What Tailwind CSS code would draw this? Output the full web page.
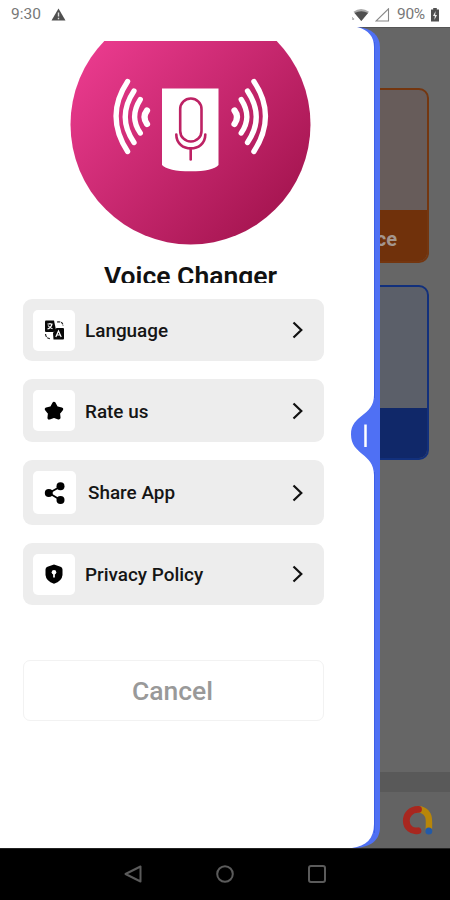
<!DOCTYPE html>
<html lang="en">
<head>
<meta charset="utf-8">
<title>Voice Changer</title>
<script src="https://cdn.jsdelivr.net/npm/@tailwindcss/browser@4"></script>
</head>
<body class="w-[450px] h-[900px] overflow-hidden flex flex-col bg-white font-[Roboto,sans-serif]">
<header class="h-[27px] shrink-0 flex items-center justify-between pl-[11px] pr-[10px] pt-[2px] text-[#777] text-[15.5px]">
  <div class="flex items-center gap-[9px]">
    <span class="w-[31px]">9:30</span>
    <svg class="-mt-px" width="15" height="13" viewBox="0 0 15 13"><path d="M7.5 .5L14.5 12.5H.5Z" fill="#505050"/><path d="M7.5 4.5V8.5M7.5 9.8V11.2" stroke="#ddd" stroke-width="1.4"/></svg>
  </div>
  <div class="flex items-center">
    <svg width="18" height="14" viewBox="0 0 18 14"><path d="M1.5 3.8Q9-2 17 3.8L9.3 13Z" fill="#aaa"/><path d="M2.500 5Q9.3 1.500 16 5L9.3 13Z" fill="#505050"/><path d="M.3 9V12M1.6 10V12" stroke="#999" stroke-width=".8"/></svg>
    <svg class="ml-[5px]" width="15" height="14" viewBox="0 0 15 14"><path d="M1 13H13.5V.8Z" fill="none" stroke="#888" stroke-width="1.1"/></svg>
    <span class="ml-[7px] w-[29px] tracking-[-0.3px]">90%</span>
    <svg class="ml-[4px]" width="10" height="14" viewBox="0 0 10 14"><path d="M3.2 0H6.8V1.5H9V13.5H1V1.5H3.2Z" fill="#505050"/><path d="M5.6 3L3 8H4.8L4.4 12L7 7H5.2Z" fill="#eee"/></svg>
  </div>
</header>

<main class="relative h-[821px] shrink-0 bg-[#666] overflow-hidden">
  <!-- dimmed page under the drawer -->
  <div class="h-full flex flex-col border-t border-[#555]">
    <div class="w-[429px] pt-[60px] flex flex-col gap-[22px]">
      <section class="h-[175px] rounded-[10px] border-2 border-[#74360f] bg-[#675c5a] overflow-hidden flex flex-col justify-end">
        <div class="h-[51px] bg-[#70310b] flex items-center justify-end pr-[30px] pt-[7px] text-[20px] font-bold text-[#a4968e]">Change Voice</div>
      </section>
      <section class="h-[175px] rounded-[10px] border-2 border-[#12307c] bg-[#5b5f69] overflow-hidden flex flex-col justify-end">
        <div class="h-[50px] bg-[#102869]"></div>
      </section>
    </div>
    <div class="mt-auto h-[20px] bg-[#595959]"></div>
    <div class="h-[56px] bg-[#636363] flex justify-end pr-[15px] pt-[11px]">
      <svg width="34" height="34" viewBox="0 0 34 34" fill="none" stroke-linecap="round"><path d="M17 6.4C18.5 5.9 24.5 7.2 27 12.5C28.5 15.5 28 22 27.8 27" stroke="#b88609" stroke-width="6.500"/><path d="M17.500 6.4C9.500 6.2 5.3 12 5.3 17.8C5.3 24.5 11 29 17 27.700" stroke="#a8271f" stroke-width="6.800"/><circle cx="27.8" cy="28" r="3.5" fill="#235aa8"/></svg>
    </div>
  </div>

  <!-- drawer surface and its pull handle -->
  <svg class="absolute left-0 top-0" width="380" height="821" viewBox="0 0 380 821">
    <path d="M0 0H357C372 1 380 9 380 20V800C380 813 371 821 352 821H0Z" fill="#4f70f4"/>
    <path d="M0 0H357C369 3 374 10 374 20V368C374 390 351 387 351 407.500C351 428 374 426 374 448V797C374 812 366 819 352 821H0Z" fill="#fff"/>
    <path d="M374.500 15V371M374.500 445V806" stroke="#3c5fe8" stroke-width="1"/>
    <path d="M365.500 397.500V420" stroke="#fff" stroke-width="2.500"/>
  </svg>

  <aside class="absolute left-0 top-0 w-[347px] h-full pl-[23px] pr-[23px] pt-[14px] flex flex-col">
    <svg class="ml-[47px] shrink-0" width="241" height="205" viewBox="70 41 241 205">
      <defs><linearGradient id="pink" x1="95" y1="45" x2="280" y2="220" gradientUnits="userSpaceOnUse"><stop stop-color="#e93a8d"/><stop offset="1" stop-color="#a51550"/></linearGradient></defs>
      <circle cx="190.500" cy="124.500" r="120" fill="url(#pink)"/>
      <path d="M162 88.500H218.500V165Q213 171.300 190.500 171.300T162 165Z" fill="#fff"/>
      <g fill="none" stroke="#bd2264" stroke-width="2.600" stroke-linecap="round"><rect x="180.200" y="98.500" width="21.300" height="43" rx="10.600"/><path d="M176.300 134.500C176.300 153 205.300 153 205.300 134.500"/><path d="M190.700 149.500V159.500"/></g>
      <g id="waves" fill="none" stroke="#fff" stroke-width="5.300" stroke-linecap="round"><path d="M127.600 81.500Q104.500 116 127.600 151.500"/><path d="M134 91Q116.500 117 134 142.500"/><path d="M140.300 99.500Q129 117 140.300 133"/><path stroke-width="6.200" d="M147 110.500Q142 117 147 124"/></g>
      <use href="#waves" transform="translate(381.500 0) scale(-1 1)"/>
    </svg>
    <h1 class="h-[37px] -ml-[23px] w-[381px] shrink-0 overflow-hidden pt-[14px] text-center text-[26.500px] leading-[31px] font-semibold text-[#111] text-nowrap">Voice Changer</h1>
    <nav class="mt-[16px] flex flex-col gap-[18px] text-[18.9px] font-medium text-[#151515]">
      <div class="h-[62px] rounded-[9px] bg-[#ededed] flex items-center pl-[10px] pr-[21px]">
        <span class="w-[42px] h-[41px] rounded-[5px] bg-white flex items-center justify-center">
          <svg width="22" height="21" viewBox="0 0 22 21"><path d="M2 1.500Q2 .5 3 .5H11L13 10L10.500 12H3Q2 12 2 11Z" fill="#080808"/><path d="M4.500 4H9.500M7 3V4.500M9 4Q8 8 4.500 9M5 5.500Q7 8 9.500 8.800" fill="none" stroke="#fff" stroke-width="1.200"/><path d="M13.500 8H20Q21 8 21 9V18.500Q21 19.500 20 19.500H10.500L10 13Z" fill="#080808"/><path d="M12.800 17L15.500 11L18.200 17M14 15H17.300" fill="none" stroke="#fff" stroke-width="1.200"/><path d="M14 2Q20 1 20 6M2.500 14Q3 19 8 18.500" fill="none" stroke="#222" stroke-width="1.200" stroke-dasharray="3 1"/></svg>
        </span>
        <span class="ml-[10px] flex-1 pt-[3px]">Language</span>
        <svg width="11" height="18" viewBox="0 0 11 18" fill="none" stroke="#111" stroke-width="2.200"><path d="M1.500 1.500L9.300 9L1.500 16.500"/></svg>
      </div>
      <div class="h-[63px] rounded-[9px] bg-[#ededed] flex items-center pl-[10px] pr-[21px]">
        <span class="w-[42px] h-[41px] rounded-[5px] bg-white flex items-center justify-center">
          <svg width="20" height="20" viewBox="0 0 20 20"><path d="M10 2.500L12.300 6.900L17.500 8.200L14.300 12.100L14.800 16.800L10 15L5.200 16.800L5.700 12.100L2.500 8.200L7.700 6.900Z" fill="#000" stroke="#000" stroke-width="3.500" stroke-linejoin="round"/></svg>
        </span>
        <span class="ml-[10px] flex-1 pt-[3px]">Rate us</span>
        <svg width="11" height="18" viewBox="0 0 11 18" fill="none" stroke="#111" stroke-width="2.200"><path d="M1.500 1.500L9.300 9L1.500 16.500"/></svg>
      </div>
      <div class="h-[65px] rounded-[9px] bg-[#ededed] flex items-center pl-[10px] pr-[21px]">
        <span class="w-[43px] h-[43px] rounded-[5px] bg-white flex items-center justify-center">
          <svg width="22" height="22" viewBox="0 0 22 22"><path d="M16.500 4.500L5 11L16.500 18" fill="none" stroke="#000" stroke-width="1.800"/><circle cx="16.500" cy="4.200" r="4" /><circle cx="4.800" cy="11" r="4"/><circle cx="16.500" cy="18" r="4"/></svg>
        </span>
        <span class="ml-[12px] flex-1 pt-[2px]">Share App</span>
        <svg width="11" height="18" viewBox="0 0 11 18" fill="none" stroke="#111" stroke-width="2.200"><path d="M1.500 1.500L9.300 9L1.500 16.500"/></svg>
      </div>
      <div class="h-[62px] rounded-[9px] bg-[#ededed] flex items-center pl-[10px] pr-[21px]">
        <span class="w-[42px] h-[41px] rounded-[5px] bg-white flex items-center justify-center">
          <svg width="18" height="20" viewBox="0 0 18 20"><path d="M9 .5L15.500 2.800Q17.500 3.500 17.500 5.500V11Q17 17 9 19.800Q1 17 .5 11V5.500Q.5 3.500 2.500 2.800Z"/><circle cx="9" cy="8.200" r="2.300" fill="#fff"/><path d="M9 9V13.500" stroke="#fff" stroke-width="1.700"/></svg>
        </span>
        <span class="ml-[10px] flex-1 pt-[3px]">Privacy Policy</span>
        <svg width="11" height="18" viewBox="0 0 11 18" fill="none" stroke="#111" stroke-width="2.200"><path d="M1.500 1.500L9.300 9L1.500 16.500"/></svg>
      </div>
    </nav>
    <button class="mt-[55px] h-[61px] shrink-0 rounded-[7px] border border-[#f2f2f2] bg-white text-[26.5px] font-medium text-[#999] pt-px pr-[2px]">Cancel</button>
  </aside>
</main>

<footer class="h-[52px] shrink-0 bg-black border-t border-[#222] flex items-center justify-center gap-[74px] pb-px">
  <svg width="18" height="18" viewBox="0 0 18 18" fill="none" stroke="#5b5b5b" stroke-width="2" stroke-linejoin="round"><path d="M1.500 9L16.500 1.500V16.500Z"/></svg>
  <svg width="18" height="18" viewBox="0 0 18 18" fill="none" stroke="#5b5b5b" stroke-width="2"><circle cx="9" cy="9" r="7.800"/></svg>
  <svg width="18" height="18" viewBox="0 0 18 18" fill="none" stroke="#5b5b5b" stroke-width="2"><rect x="1" y="1" width="16" height="16" rx="2"/></svg>
</footer>
</body>
</html>
